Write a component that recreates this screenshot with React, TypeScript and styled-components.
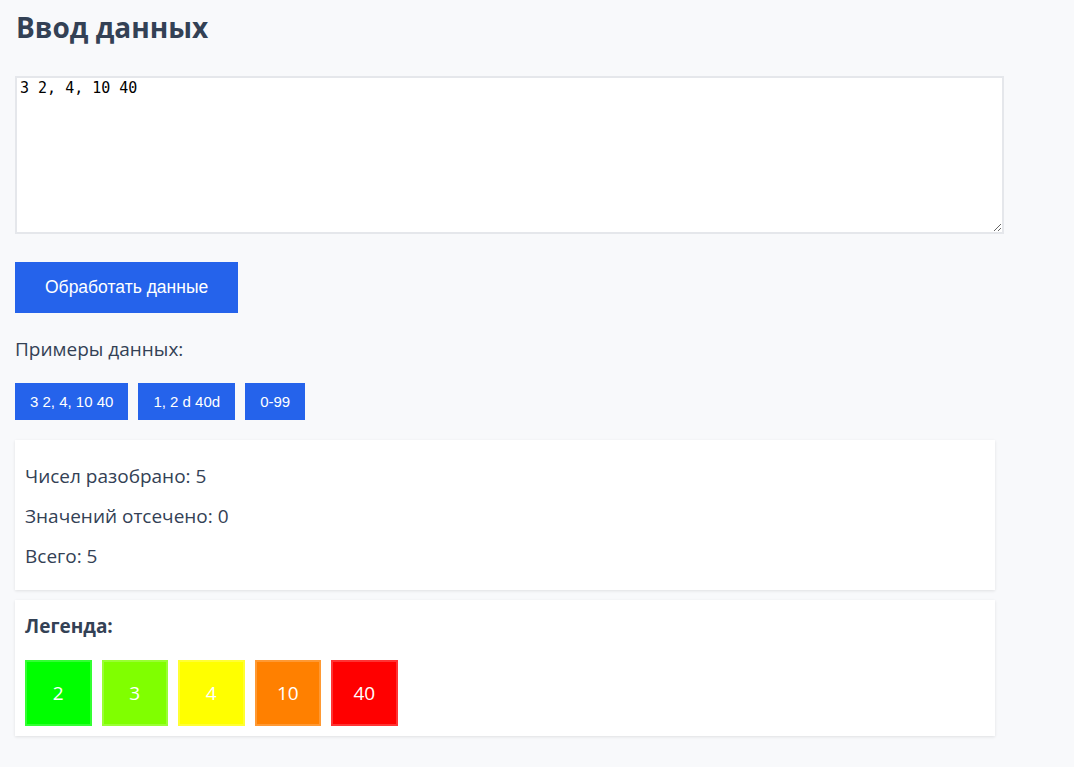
import React, { useState } from "react";
import styled, { createGlobalStyle } from "styled-components";

const GlobalStyle = createGlobalStyle`
  html, body {
    margin: 0;
    padding: 0;
    background: #f8f9fb;
  }
  body {
    font-family: "Open Sans", "Noto Sans", sans-serif;
    color: #334155;
  }
  * { box-sizing: border-box; }
`;

const Page = styled.div`
  padding: 8px 79px 30px 15px;
  min-height: 767px;
`;

const Container = styled.div`
  width: 980px;
`;

const Title = styled.h1`
  margin: 0 0 30px 1px;
  font-size: 28px;
  font-weight: 700;
  line-height: 38px;
  color: #334155;
`;

const Input = styled.textarea`
  display: block;
  width: 989px;
  height: 158px;
  margin: 0;
  padding: 2px 3px;
  border: 2px solid #e5e7eb;
  background: #fff;
  font-family: "DejaVu Sans Mono", "Liberation Mono", monospace;
  font-size: 15px;
  line-height: 17px;
  color: #000;
  outline: none;
`;

const PrimaryButton = styled.button`
  display: block;
  margin-top: 28px;
  height: 51px;
  padding: 0 30px;
  border: none;
  background: #2563eb;
  color: #fff;
  font-family: "Liberation Sans", Arial, sans-serif;
  font-size: 17.5px;
  cursor: pointer;
`;

const Label = styled.div`
  margin-top: 24px;
  font-size: 19px;
  line-height: 24px;
`;

const Samples = styled.div`
  display: flex;
  gap: 10px;
  margin-top: 22px;
`;

const SampleButton = styled.button`
  height: 37px;
  padding: 0 15px;
  border: none;
  background: #2563eb;
  color: #fff;
  font-family: "Liberation Sans", Arial, sans-serif;
  font-size: 15px;
  cursor: pointer;
`;

const Card = styled.div<{ $pad: string }>`
  margin-top: 20px;
  background: #fff;
  padding: ${(p) => p.$pad};
  box-shadow: 0 1px 3px rgba(0, 0, 0, 0.1);
  & + & {
    margin-top: 10px;
  }
`;

const Stat = styled.p`
  margin: 16px 0;
  font-size: 19px;
  line-height: 24px;
`;

const LegendTitle = styled.div`
  margin: 4px 0 22px;
  font-size: 19px;
  line-height: 24px;
  font-weight: 700;
`;

const Swatches = styled.div`
  display: flex;
  gap: 10px;
`;

const Swatch = styled.div<{ $color: string }>`
  width: 66.5px;
  height: 66px;
  display: flex;
  align-items: center;
  justify-content: center;
  background: ${(p) => p.$color};
  border: 2px solid rgba(255, 255, 255, 0.2);
  color: #fff;
  font-size: 19px;
`;

const samples = ["3 2, 4, 10 40", "1, 2 d 40d", "0-99"];
const legend = [
  { v: "2", c: "#00ff00" },
  { v: "3", c: "#80ff00" },
  { v: "4", c: "#ffff00" },
  { v: "10", c: "#ff8000" },
  { v: "40", c: "#ff0000" },
];

export default function App() {
  const [text, setText] = useState("3 2, 4, 10 40");
  return (
    <>
      <GlobalStyle />
      <Page>
        <Container>
          <Title>Ввод данных</Title>
          <Input value={text} onChange={(e) => setText(e.target.value)} />
          <PrimaryButton>Обработать данные</PrimaryButton>
          <Label>Примеры данных:</Label>
          <Samples>
            {samples.map((s) => (
              <SampleButton key={s} onClick={() => setText(s)}>
                {s}
              </SampleButton>
            ))}
          </Samples>
          <Card $pad="8px 10px 6px">
            <Stat>Чисел разобрано: 5</Stat>
            <Stat>Значений отсечено: 0</Stat>
            <Stat>Всего: 5</Stat>
          </Card>
          <Card $pad="10px">
            <LegendTitle>Легенда:</LegendTitle>
            <Swatches>
              {legend.map((l) => (
                <Swatch key={l.v} $color={l.c}>
                  {l.v}
                </Swatch>
              ))}
            </Swatches>
          </Card>
        </Container>
      </Page>
    </>
  );
}
